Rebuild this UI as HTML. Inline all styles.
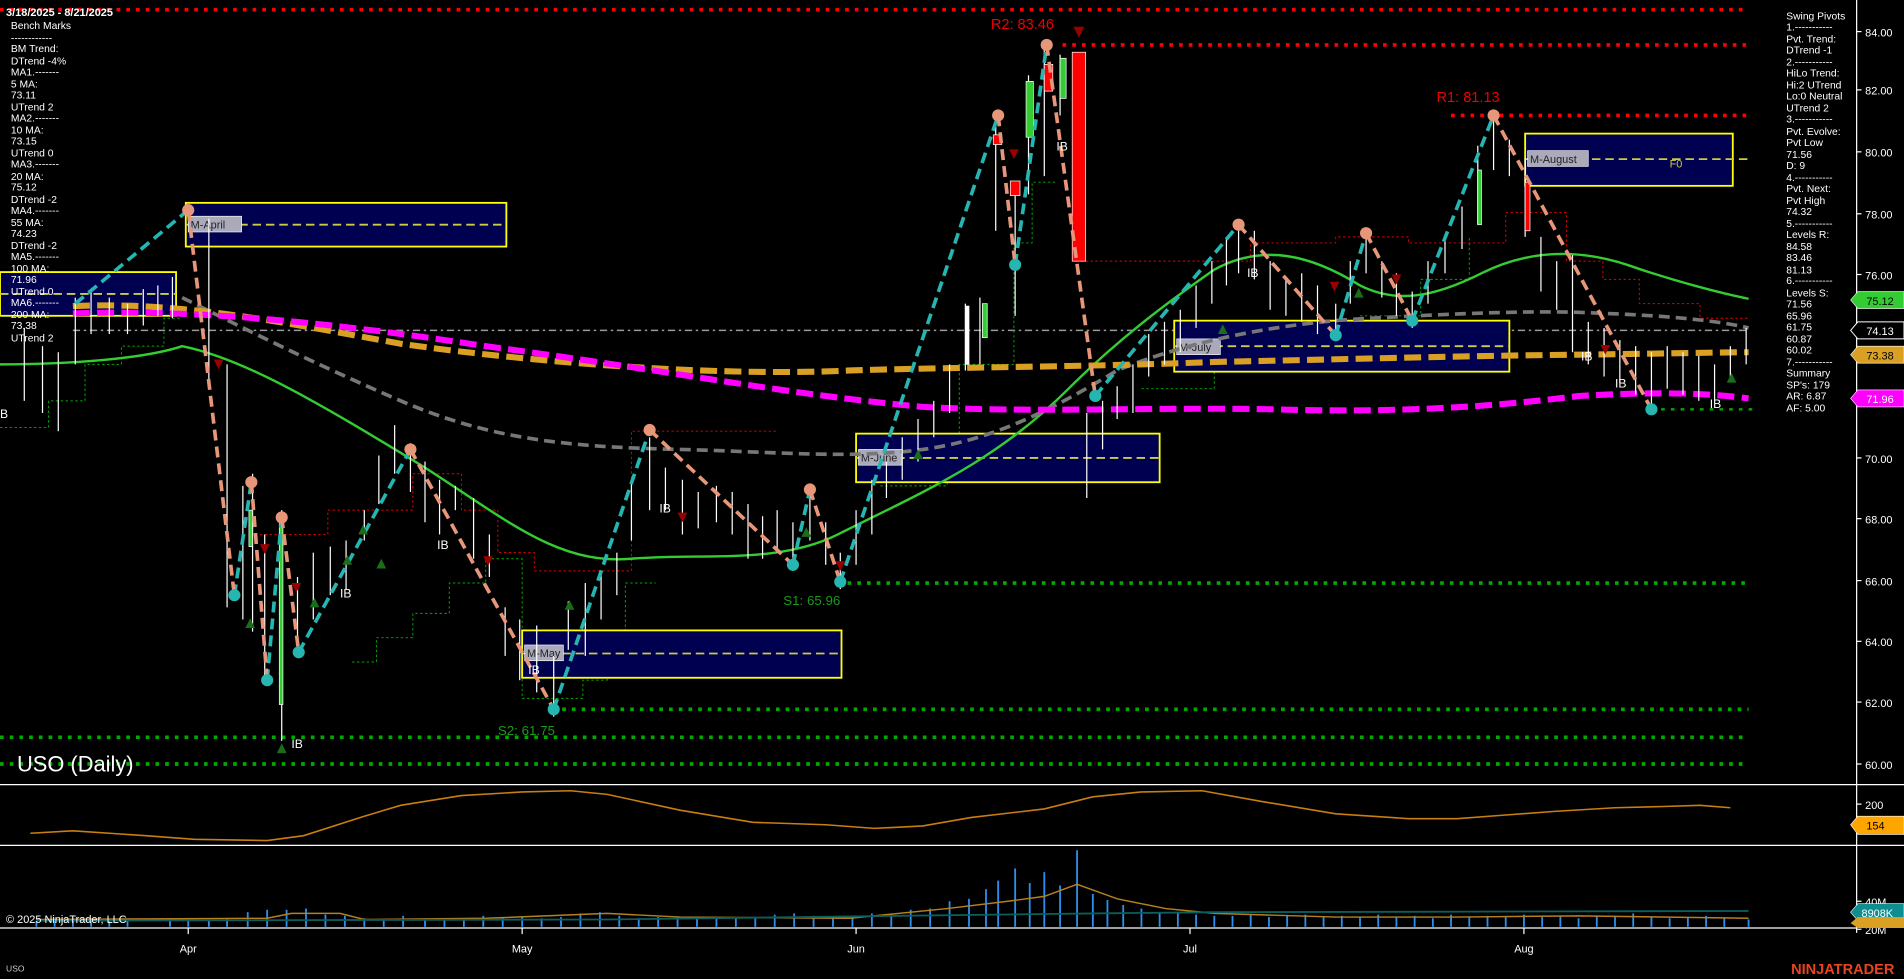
<!DOCTYPE html>
<html><head><meta charset="utf-8"><style>
html,body{margin:0;padding:0;background:#000;overflow:hidden}
svg{display:block}
text{font-family:"Liberation Sans",sans-serif}
</style></head><body>
<svg width="1904" height="979" viewBox="0 0 1568 806" preserveAspectRatio="none" xmlns="http://www.w3.org/2000/svg">
<rect width="1568" height="806" fill="#000"/>
<!-- horizontal level lines -->
<line x1="0" y1="8" x2="1440" y2="8" stroke="#f00" stroke-width="3" stroke-dasharray="3,5"/>
<line x1="875" y1="37" x2="1440" y2="37" stroke="#f00" stroke-width="3" stroke-dasharray="3,5"/>
<line x1="1195" y1="95" x2="1440" y2="95" stroke="#f00" stroke-width="3" stroke-dasharray="3,5"/>
<line x1="690" y1="480" x2="1440" y2="480" stroke="#0a0" stroke-width="3" stroke-dasharray="3,5"/>
<line x1="455" y1="584" x2="1440" y2="584" stroke="#0a0" stroke-width="3" stroke-dasharray="3,5"/>
<line x1="0" y1="607" x2="1440" y2="607" stroke="#0a0" stroke-width="3" stroke-dasharray="3,5"/>
<line x1="0" y1="629" x2="1440" y2="629" stroke="#0a0" stroke-width="3" stroke-dasharray="3,5"/>
<line x1="1360" y1="337" x2="1448" y2="337" stroke="#0a0" stroke-width="2" stroke-dasharray="3,5"/>
<line x1="60" y1="272" x2="1440" y2="272" stroke="#999" stroke-width="1.2" stroke-dasharray="6,3,2,3"/>
<!-- thin step lines -->
<polyline points="0,352 40,352 40,330 70,330 70,300 100,300 100,285 135,285 135,262 150,262" fill="none" stroke="#0a0" stroke-width="0.8" stroke-dasharray="2,2"/>
<polyline points="290,545 310,545 310,525 340,525 340,505 370,505 370,480 400,480 400,460 430,460 430,575 480,575 480,560 500,560 500,520 515,520 515,480 540,480" fill="none" stroke="#0a0" stroke-width="0.8" stroke-dasharray="2,2"/>
<polyline points="725,400 780,400 780,370 790,370 790,300 835,300 835,200 850,200 850,150 870,150" fill="none" stroke="#0a0" stroke-width="0.8" stroke-dasharray="2,2"/>
<polyline points="940,320 1000,320 1000,300 1060,300 1060,280 1120,280 1120,260 1170,260 1170,230 1210,230 1210,195" fill="none" stroke="#0a0" stroke-width="0.8" stroke-dasharray="2,2"/>
<polyline points="210,440 270,440 270,420 340,420 340,390 380,390 380,420 410,420 410,455 440,455 440,470 520,470 520,355 640,355" fill="none" stroke="#d00" stroke-width="0.8" stroke-dasharray="2,2"/>
<polyline points="890,215 1030,215 1030,200 1100,200 1100,195 1160,195 1160,200 1240,200 1240,175 1290,175 1290,215 1320,215 1320,230 1350,230 1350,250 1400,250 1400,262 1440,262" fill="none" stroke="#d00" stroke-width="0.8" stroke-dasharray="2,2"/>
<!-- boxes -->
<g stroke="#ff0" stroke-width="1.5" fill="#000050">
<rect x="153" y="167" width="264" height="36"/>
<rect x="0" y="224" width="145" height="36"/>
<rect x="430" y="519" width="263" height="39"/>
<rect x="705" y="357" width="250" height="40"/>
<rect x="967" y="264" width="276" height="42"/>
<rect x="1256" y="110" width="171" height="43"/>
</g>
<g stroke="#cc4" stroke-width="1.5" stroke-dasharray="7,4">
<line x1="153" y1="185" x2="417" y2="185"/><line x1="0" y1="242" x2="145" y2="242"/>
<line x1="430" y1="538" x2="693" y2="538"/><line x1="705" y1="377" x2="955" y2="377"/>
<line x1="967" y1="285" x2="1243" y2="285"/><line x1="1256" y1="131" x2="1440" y2="131"/>
</g>
<g fill="#aab" stroke="#fff" stroke-width="0.5">
<rect x="155" y="178" width="44" height="13"/><rect x="432" y="531" width="32" height="13"/>
<rect x="707" y="370" width="36" height="13"/><rect x="969" y="279" width="36" height="13"/><rect x="1258" y="124" width="50" height="13"/>
</g>
<g font-size="9" fill="#222"><text x="157" y="188">M-April</text><text x="434" y="541">M-May</text><text x="709" y="380">M-June</text><text x="971" y="289">M-July</text><text x="1260" y="134">M-August</text></g>
<text x="1375" y="138" font-size="9" fill="#cc4">F0</text>
<!-- MAs -->
<path d="M0,300 C60,300 120,295 150,285 C200,295 260,330 350,385 C420,430 460,465 520,460 C580,455 640,465 690,440 C760,405 820,380 880,320 C920,280 960,250 1000,222 C1040,200 1080,210 1120,235 C1150,250 1180,245 1220,225 C1260,205 1300,205 1340,218 C1380,232 1420,242 1440,246" fill="none" stroke="#3c3" stroke-width="2"/>
<path d="M150,245 C200,270 260,300 330,330 C400,360 460,368 560,370 C640,372 700,378 760,370 C820,362 870,335 920,305 C980,280 1060,265 1130,262 C1200,258 1270,255 1320,258 C1380,260 1420,265 1440,270" fill="none" stroke="#777" stroke-width="3" stroke-dasharray="9,5"/>
<path d="M60,252 C150,248 230,265 330,283 C450,300 600,310 700,305 C800,302 900,302 1000,298 C1100,296 1200,293 1300,292 C1380,291 1420,290 1440,290" fill="none" stroke="#d9a024" stroke-width="5" stroke-dasharray="14,6"/>
<path d="M60,258 C150,255 250,262 400,285 C550,305 650,325 760,335 C850,340 950,335 1050,337 C1150,340 1230,335 1300,326 C1370,322 1410,324 1440,328" fill="none" stroke="#f0f" stroke-width="5" stroke-dasharray="14,6"/>
<!-- candles -->
<g stroke="#fff" stroke-width="1">
<line x1="20" y1="270" x2="20" y2="330"/><line x1="35" y1="285" x2="35" y2="340"/><line x1="48" y1="290" x2="48" y2="355"/><line x1="62" y1="245" x2="62" y2="300"/><line x1="75" y1="240" x2="75" y2="275"/><line x1="90" y1="245" x2="90" y2="275"/><line x1="105" y1="250" x2="105" y2="275"/><line x1="118" y1="238" x2="118" y2="268"/><line x1="130" y1="235" x2="130" y2="260"/><line x1="142" y1="228" x2="142" y2="262"/>
<line x1="172" y1="180" x2="172" y2="320"/><line x1="187" y1="300" x2="187" y2="500"/><line x1="200" y1="400" x2="200" y2="510"/><line x1="208" y1="390" x2="208" y2="520"/><line x1="218" y1="440" x2="218" y2="560"/><line x1="232" y1="420" x2="232" y2="610"/><line x1="245" y1="475" x2="245" y2="540"/><line x1="258" y1="455" x2="258" y2="510"/><line x1="272" y1="450" x2="272" y2="490"/><line x1="285" y1="445" x2="285" y2="485"/><line x1="300" y1="420" x2="300" y2="445"/><line x1="312" y1="375" x2="312" y2="415"/><line x1="325" y1="350" x2="325" y2="390"/><line x1="338" y1="365" x2="338" y2="405"/><line x1="350" y1="380" x2="350" y2="430"/><line x1="362" y1="395" x2="362" y2="440"/><line x1="375" y1="400" x2="375" y2="420"/><line x1="390" y1="410" x2="390" y2="460"/><line x1="403" y1="440" x2="403" y2="475"/><line x1="416" y1="500" x2="416" y2="540"/><line x1="428" y1="510" x2="428" y2="560"/><line x1="442" y1="515" x2="442" y2="570"/><line x1="456" y1="540" x2="456" y2="590"/><line x1="468" y1="495" x2="468" y2="535"/><line x1="482" y1="480" x2="482" y2="540"/><line x1="495" y1="470" x2="495" y2="510"/><line x1="508" y1="455" x2="508" y2="490"/><line x1="520" y1="395" x2="520" y2="445"/><line x1="535" y1="360" x2="535" y2="420"/><line x1="548" y1="385" x2="548" y2="420"/><line x1="562" y1="395" x2="562" y2="440"/><line x1="575" y1="405" x2="575" y2="435"/><line x1="590" y1="400" x2="590" y2="430"/><line x1="603" y1="405" x2="603" y2="440"/><line x1="616" y1="415" x2="616" y2="460"/><line x1="628" y1="425" x2="628" y2="460"/><line x1="640" y1="420" x2="640" y2="455"/><line x1="653" y1="430" x2="653" y2="470"/><line x1="667" y1="405" x2="667" y2="445"/><line x1="680" y1="430" x2="680" y2="465"/><line x1="692" y1="455" x2="692" y2="485"/><line x1="705" y1="420" x2="705" y2="465"/><line x1="718" y1="395" x2="718" y2="440"/><line x1="730" y1="380" x2="730" y2="410"/><line x1="743" y1="360" x2="743" y2="395"/><line x1="756" y1="345" x2="756" y2="380"/><line x1="769" y1="330" x2="769" y2="360"/><line x1="782" y1="300" x2="782" y2="340"/><line x1="795" y1="250" x2="795" y2="305"/><line x1="807" y1="245" x2="807" y2="300"/><line x1="820" y1="100" x2="820" y2="190"/><line x1="836" y1="160" x2="836" y2="260"/><line x1="847" y1="62" x2="847" y2="160"/><line x1="860" y1="40" x2="860" y2="145"/><line x1="873" y1="45" x2="873" y2="95"/>
<line x1="895" y1="340" x2="895" y2="410"/><line x1="908" y1="330" x2="908" y2="370"/><line x1="920" y1="318" x2="920" y2="345"/><line x1="933" y1="300" x2="933" y2="340"/><line x1="946" y1="275" x2="946" y2="310"/><line x1="959" y1="265" x2="959" y2="300"/><line x1="972" y1="255" x2="972" y2="290"/><line x1="985" y1="235" x2="985" y2="270"/><line x1="998" y1="215" x2="998" y2="250"/><line x1="1010" y1="195" x2="1010" y2="235"/><line x1="1020" y1="185" x2="1020" y2="225"/><line x1="1033" y1="190" x2="1033" y2="230"/><line x1="1046" y1="215" x2="1046" y2="255"/><line x1="1059" y1="230" x2="1059" y2="260"/><line x1="1072" y1="225" x2="1072" y2="265"/><line x1="1085" y1="235" x2="1085" y2="275"/><line x1="1100" y1="250" x2="1100" y2="280"/><line x1="1112" y1="215" x2="1112" y2="250"/><line x1="1125" y1="190" x2="1125" y2="225"/><line x1="1138" y1="215" x2="1138" y2="245"/><line x1="1150" y1="225" x2="1150" y2="260"/><line x1="1163" y1="240" x2="1163" y2="270"/><line x1="1176" y1="215" x2="1176" y2="250"/><line x1="1190" y1="195" x2="1190" y2="225"/><line x1="1204" y1="170" x2="1204" y2="205"/><line x1="1217" y1="120" x2="1217" y2="185"/><line x1="1230" y1="95" x2="1230" y2="140"/><line x1="1243" y1="115" x2="1243" y2="145"/><line x1="1256" y1="130" x2="1256" y2="195"/><line x1="1269" y1="195" x2="1269" y2="240"/><line x1="1282" y1="215" x2="1282" y2="255"/><line x1="1295" y1="210" x2="1295" y2="290"/><line x1="1308" y1="265" x2="1308" y2="300"/><line x1="1321" y1="270" x2="1321" y2="310"/><line x1="1334" y1="280" x2="1334" y2="315"/><line x1="1347" y1="285" x2="1347" y2="325"/><line x1="1360" y1="290" x2="1360" y2="340"/><line x1="1373" y1="285" x2="1373" y2="320"/><line x1="1386" y1="290" x2="1386" y2="325"/><line x1="1399" y1="293" x2="1399" y2="330"/><line x1="1412" y1="300" x2="1412" y2="330"/><line x1="1425" y1="285" x2="1425" y2="315"/><line x1="1438" y1="270" x2="1438" y2="300"/>
</g>
<g stroke="#fff" stroke-width="0.6">
<rect x="845" y="67" width="6" height="46" fill="#3c3"/><rect x="873" y="48" width="5" height="33" fill="#3c3"/>
<rect x="883" y="43" width="11" height="172" fill="#f00"/><rect x="832" y="149" width="8" height="12" fill="#f00"/>
<rect x="818" y="111" width="7" height="8" fill="#f00"/><rect x="860" y="53" width="7" height="22" fill="#f00"/>
<rect x="230" y="430" width="3" height="150" fill="#3c3"/><rect x="205" y="420" width="3" height="30" fill="#3c3"/>
<rect x="795" y="252" width="3" height="48" fill="#fff"/><rect x="809" y="250" width="4" height="28" fill="#3c3"/>
<rect x="1217" y="140" width="3" height="45" fill="#3c3"/><rect x="1256" y="150" width="4" height="40" fill="#f00"/>
</g>
<!-- swing zigzag -->
<polyline points="62,250 155,173 M193,490" fill="none"/>
<g fill="none" stroke-width="3" stroke-dasharray="9,5">
<path stroke="#26b5b0" d="M62,250 L155,173 M193,490 L207,397 M220,560 L232,426 M246,537 L338,370 M456,584 L535,354 M653,465 L667,403 M692,479 L822,95 M836,218 L862,37 M902,326 L1020,185 M1100,276 L1125,192 M1163,264 L1230,95"/>
<path stroke="#e8967a" d="M155,173 L193,490 M207,397 L220,560 M232,426 L246,537 M338,370 L456,584 M535,354 L653,465 M667,403 L692,479 M822,95 L836,218 M862,37 L902,326 M1020,185 L1100,276 M1125,192 L1163,264 M1230,95 L1360,337"/>
</g>
<g fill="#e8967a"><circle cx="155" cy="173" r="5"/><circle cx="207" cy="397" r="5"/><circle cx="232" cy="426" r="5"/><circle cx="338" cy="370" r="5"/><circle cx="535" cy="354" r="5"/><circle cx="667" cy="403" r="5"/><circle cx="822" cy="95" r="5"/><circle cx="862" cy="37" r="5"/><circle cx="1020" cy="185" r="5"/><circle cx="1125" cy="192" r="5"/><circle cx="1230" cy="95" r="5"/></g>
<g fill="#26b5b0"><circle cx="193" cy="490" r="5"/><circle cx="220" cy="560" r="5"/><circle cx="246" cy="537" r="5"/><circle cx="456" cy="584" r="5"/><circle cx="653" cy="465" r="5"/><circle cx="692" cy="479" r="5"/><circle cx="836" cy="218" r="5"/><circle cx="902" cy="326" r="5"/><circle cx="1100" cy="276" r="5"/><circle cx="1163" cy="264" r="5"/><circle cx="1360" cy="337" r="5"/></g>
<!-- triangles -->
<g fill="#900"><path d="M176,296h8l-4,8z"/><path d="M214,448h8l-4,8z"/><path d="M240,480h8l-4,8z"/><path d="M398,458h8l-4,8z"/><path d="M558,422h8l-4,8z"/><path d="M688,462h8l-4,8z"/><path d="M831,123h8l-4,8z"/><path d="M884,22h9l-4.5,9z"/><path d="M1095,232h8l-4,8z"/><path d="M1146,226h8l-4,8z"/><path d="M1318,284h8l-4,8z"/></g>
<g fill="#1a6e1a"><path d="M202,517h8l-4,-8z"/><path d="M228,620h8l-4,-8z"/><path d="M255,500h8l-4,-8z"/><path d="M282,465h8l-4,-8z"/><path d="M295,440h8l-4,-8z"/><path d="M310,468h8l-4,-8z"/><path d="M465,502h8l-4,-8z"/><path d="M660,442h8l-4,-8z"/><path d="M752,378h8l-4,-8z"/><path d="M1003,275h8l-4,-8z"/><path d="M1115,245h8l-4,-8z"/><path d="M1422,315h8l-4,-8z"/></g>
<g font-size="10" fill="#fff"><text x="240" y="616">IB</text><text x="280" y="492">IB</text><text x="360" y="452">IB</text><text x="543" y="422">IB</text><text x="435" y="555">IB</text><text x="870" y="124">IB</text><text x="1027" y="228">IB</text><text x="1302" y="297">IB</text><text x="1330" y="319">IB</text><text x="1408" y="336">IB</text><text x="0" y="344">B</text></g>
<!-- level labels -->
<text x="816" y="24" font-size="12" fill="#e00">R2: 83.46</text>
<text x="1183" y="84" font-size="12" fill="#e00">R1: 81.13</text>
<text x="645" y="498" font-size="11" fill="#1a9a1a">S1: 65.96</text>
<text x="410" y="605" font-size="11" fill="#1a9a1a">S2: 61.75</text>
<text x="14" y="635" font-size="18" fill="#fff">USO (Daily)</text>
<text x="5" y="13" font-size="9" fill="#fff" font-weight="bold">3/18/2025 - 8/21/2025</text>
<!-- left info -->
<g font-size="8.5" fill="#fff">
<text x="9" y="24">Bench Marks</text><text x="9" y="34">------------</text><text x="9" y="43">BM Trend:</text><text x="9" y="53">DTrend -4%</text><text x="9" y="62">MA1.-------</text><text x="9" y="72">5 MA:</text><text x="9" y="81">73.11</text><text x="9" y="91">UTrend 2</text><text x="9" y="100">MA2.-------</text><text x="9" y="110">10 MA:</text><text x="9" y="119">73.15</text><text x="9" y="129">UTrend 0</text><text x="9" y="138">MA3.-------</text><text x="9" y="148">20 MA:</text><text x="9" y="157">75.12</text><text x="9" y="167">DTrend -2</text><text x="9" y="176">MA4.-------</text><text x="9" y="186">55 MA:</text><text x="9" y="195">74.23</text><text x="9" y="205">DTrend -2</text><text x="9" y="214">MA5.-------</text><text x="9" y="224">100 MA:</text><text x="9" y="233">71.96</text><text x="9" y="243">UTrend 0</text><text x="9" y="252">MA6.-------</text><text x="9" y="262">200 MA:</text><text x="9" y="271">73.38</text><text x="9" y="281">UTrend 2</text>
</g>
<!-- right info -->
<g font-size="8.5" fill="#fff">
<text x="1471" y="16">Swing Pivots</text><text x="1471" y="25">1.-----------</text><text x="1471" y="35">Pvt. Trend:</text><text x="1471" y="44">DTrend -1</text><text x="1471" y="54">2.-----------</text><text x="1471" y="63">HiLo Trend:</text><text x="1471" y="73">Hi:2 UTrend</text><text x="1471" y="82">Lo:0 Neutral</text><text x="1471" y="92">UTrend 2</text><text x="1471" y="101">3.-----------</text><text x="1471" y="111">Pvt. Evolve:</text><text x="1471" y="120">Pvt Low</text><text x="1471" y="130">71.56</text><text x="1471" y="139">D: 9</text><text x="1471" y="149">4.-----------</text><text x="1471" y="158">Pvt. Next:</text><text x="1471" y="168">Pvt High</text><text x="1471" y="177">74.32</text><text x="1471" y="187">5.-----------</text><text x="1471" y="196">Levels R:</text><text x="1471" y="206">84.58</text><text x="1471" y="215">83.46</text><text x="1471" y="225">81.13</text><text x="1471" y="234">6.-----------</text><text x="1471" y="244">Levels S:</text><text x="1471" y="253">71.56</text><text x="1471" y="263">65.96</text><text x="1471" y="272">61.75</text><text x="1471" y="282">60.87</text><text x="1471" y="291">60.02</text><text x="1471" y="301">7.-----------</text><text x="1471" y="310">Summary</text><text x="1471" y="320">SP's: 179</text><text x="1471" y="329">AR: 6.87</text><text x="1471" y="339">AF: 5.00</text>
</g>
<!-- axis -->
<line x1="1529" y1="0" x2="1529" y2="768" stroke="#fff" stroke-width="1"/>
<g stroke="#fff"><line x1="1529" y1="26" x2="1533" y2="26"/><line x1="1529" y1="74" x2="1533" y2="74"/><line x1="1529" y1="125" x2="1533" y2="125"/><line x1="1529" y1="176" x2="1533" y2="176"/><line x1="1529" y1="226" x2="1533" y2="226"/><line x1="1529" y1="377" x2="1533" y2="377"/><line x1="1529" y1="427" x2="1533" y2="427"/><line x1="1529" y1="478" x2="1533" y2="478"/><line x1="1529" y1="528" x2="1533" y2="528"/><line x1="1529" y1="578" x2="1533" y2="578"/><line x1="1529" y1="629" x2="1533" y2="629"/><line x1="1529" y1="662" x2="1533" y2="662"/><line x1="1529" y1="742" x2="1533" y2="742"/><line x1="1529" y1="765" x2="1533" y2="765"/></g>
<g font-size="9" fill="#fff"><text x="1536" y="30">84.00</text><text x="1536" y="78">82.00</text><text x="1536" y="129">80.00</text><text x="1536" y="180">78.00</text><text x="1536" y="230">76.00</text><text x="1536" y="381">70.00</text><text x="1536" y="431">68.00</text><text x="1536" y="482">66.00</text><text x="1536" y="532">64.00</text><text x="1536" y="582">62.00</text><text x="1536" y="633">60.00</text><text x="1536" y="666">200</text><text x="1536" y="746">40M</text><text x="1536" y="769">20M</text></g>
<!-- flags -->
<path d="M1524,247 l6,-7 h38 v14 h-38z" fill="#3c3" stroke="#fff" stroke-width="0.5"/><text x="1537" y="251" font-size="9" fill="#000">75.12</text>
<path d="M1524,272 l6,-7 h38 v14 h-38z" fill="#000" stroke="#fff" stroke-width="0.8"/><text x="1537" y="276" font-size="9" fill="#fff">74.13</text>
<path d="M1524,292 l6,-7 h38 v14 h-38z" fill="#d9a024" stroke="#fff" stroke-width="0.5"/><text x="1537" y="296" font-size="9" fill="#000">73.38</text>
<path d="M1524,328 l6,-7 h38 v14 h-38z" fill="#f0f" stroke="#fff" stroke-width="0.5"/><text x="1537" y="332" font-size="9" fill="#fff">71.96</text>
<!-- panels separators -->
<line x1="0" y1="646" x2="1568" y2="646" stroke="#fff" stroke-width="1"/>
<line x1="0" y1="696" x2="1568" y2="696" stroke="#fff" stroke-width="1"/>
<line x1="0" y1="764" x2="1529" y2="764" stroke="#fff" stroke-width="1"/>
<!-- indicator -->
<path d="M25,686 L60,684 L120,688 L160,691 L220,692 L250,688 L300,672 L330,663 L380,655 L430,652 L470,651 L500,654 L560,667 L620,677 L680,679 L720,682 L760,680 L800,673 L860,666 L900,656 L940,652 L990,651 L1040,660 L1100,670 L1160,674 L1200,674 L1240,671 L1280,668 L1330,665 L1370,664 L1400,663 L1425,665" fill="none" stroke="#c87e10" stroke-width="1.3"/>
<path d="M1524,679 l6,-7 h38 v15 h-38z" fill="#ffa500" stroke="#fff" stroke-width="0.5"/><text x="1537" y="683" font-size="9" fill="#000">154</text>
<!-- volume -->
<g stroke="#2a8ff0" stroke-width="1.5">
<line x1="30" y1="763" x2="30" y2="758"/><line x1="45" y1="763" x2="45" y2="757"/><line x1="60" y1="763" x2="60" y2="756"/><line x1="75" y1="763" x2="75" y2="758"/><line x1="90" y1="763" x2="90" y2="757"/><line x1="105" y1="763" x2="105" y2="758"/><line x1="140" y1="763" x2="140" y2="757"/><line x1="155" y1="763" x2="155" y2="757"/><line x1="172" y1="763" x2="172" y2="757"/><line x1="187" y1="763" x2="187" y2="756"/><line x1="204" y1="763" x2="204" y2="751"/><line x1="220" y1="763" x2="220" y2="749"/><line x1="236" y1="763" x2="236" y2="749"/><line x1="252" y1="763" x2="252" y2="748"/><line x1="268" y1="763" x2="268" y2="753"/><line x1="284" y1="763" x2="284" y2="754"/><line x1="300" y1="763" x2="300" y2="756"/><line x1="316" y1="763" x2="316" y2="757"/><line x1="332" y1="763" x2="332" y2="754"/><line x1="350" y1="763" x2="350" y2="756"/><line x1="366" y1="763" x2="366" y2="756"/><line x1="382" y1="763" x2="382" y2="756"/><line x1="398" y1="763" x2="398" y2="754"/><line x1="414" y1="763" x2="414" y2="755"/><line x1="430" y1="763" x2="430" y2="755"/><line x1="446" y1="763" x2="446" y2="756"/><line x1="462" y1="763" x2="462" y2="755"/><line x1="478" y1="763" x2="478" y2="752"/><line x1="494" y1="763" x2="494" y2="751"/><line x1="510" y1="763" x2="510" y2="754"/><line x1="526" y1="763" x2="526" y2="756"/><line x1="542" y1="763" x2="542" y2="755"/><line x1="558" y1="763" x2="558" y2="755"/><line x1="574" y1="763" x2="574" y2="755"/><line x1="590" y1="763" x2="590" y2="755"/><line x1="606" y1="763" x2="606" y2="755"/><line x1="622" y1="763" x2="622" y2="755"/><line x1="638" y1="763" x2="638" y2="753"/><line x1="654" y1="763" x2="654" y2="752"/><line x1="670" y1="763" x2="670" y2="754"/><line x1="686" y1="763" x2="686" y2="755"/><line x1="702" y1="763" x2="702" y2="754"/><line x1="718" y1="763" x2="718" y2="752"/><line x1="734" y1="763" x2="734" y2="752"/><line x1="750" y1="763" x2="750" y2="749"/><line x1="766" y1="763" x2="766" y2="748"/><line x1="782" y1="763" x2="782" y2="742"/><line x1="798" y1="763" x2="798" y2="740"/><line x1="812" y1="763" x2="812" y2="732"/><line x1="822" y1="763" x2="822" y2="725"/><line x1="836" y1="763" x2="836" y2="715"/><line x1="848" y1="763" x2="848" y2="727"/><line x1="860" y1="763" x2="860" y2="718"/><line x1="873" y1="763" x2="873" y2="729"/><line x1="887" y1="763" x2="887" y2="700"/><line x1="900" y1="763" x2="900" y2="736"/><line x1="912" y1="763" x2="912" y2="741"/><line x1="925" y1="763" x2="925" y2="745"/><line x1="940" y1="763" x2="940" y2="748"/><line x1="955" y1="763" x2="955" y2="751"/><line x1="970" y1="763" x2="970" y2="752"/><line x1="985" y1="763" x2="985" y2="753"/><line x1="1000" y1="763" x2="1000" y2="754"/><line x1="1015" y1="763" x2="1015" y2="754"/><line x1="1030" y1="763" x2="1030" y2="753"/><line x1="1045" y1="763" x2="1045" y2="755"/><line x1="1060" y1="763" x2="1060" y2="754"/><line x1="1075" y1="763" x2="1075" y2="753"/><line x1="1090" y1="763" x2="1090" y2="755"/><line x1="1105" y1="763" x2="1105" y2="754"/><line x1="1120" y1="763" x2="1120" y2="755"/><line x1="1135" y1="763" x2="1135" y2="753"/><line x1="1150" y1="763" x2="1150" y2="755"/><line x1="1165" y1="763" x2="1165" y2="754"/><line x1="1180" y1="763" x2="1180" y2="756"/><line x1="1195" y1="763" x2="1195" y2="753"/><line x1="1210" y1="763" x2="1210" y2="755"/><line x1="1225" y1="763" x2="1225" y2="754"/><line x1="1240" y1="763" x2="1240" y2="755"/><line x1="1255" y1="763" x2="1255" y2="753"/><line x1="1270" y1="763" x2="1270" y2="755"/><line x1="1285" y1="763" x2="1285" y2="754"/><line x1="1300" y1="763" x2="1300" y2="756"/><line x1="1315" y1="763" x2="1315" y2="754"/><line x1="1330" y1="763" x2="1330" y2="754"/><line x1="1345" y1="763" x2="1345" y2="752"/><line x1="1360" y1="763" x2="1360" y2="755"/><line x1="1375" y1="763" x2="1375" y2="756"/><line x1="1390" y1="763" x2="1390" y2="755"/><line x1="1405" y1="763" x2="1405" y2="754"/><line x1="1420" y1="763" x2="1420" y2="756"/><line x1="1440" y1="763" x2="1440" y2="757"/>
</g>
<path d="M30,757 L220,756 L240,752 L280,752 L300,757 L400,756 L500,752 L560,755 L700,756 L780,748 L830,742 L860,738 L887,728 L920,740 L960,748 L1000,752 L1100,755 L1200,755 L1300,754 L1440,756" fill="none" stroke="#b58020" stroke-width="1.2"/>
<path d="M30,758 L500,757 L900,752 L1000,751 L1440,750" fill="none" stroke="#0a5e5e" stroke-width="1.5"/>
<path d="M1524,751 l6,-7 h38 v14 h-38z" fill="#0e8e8e" stroke="#fff" stroke-width="0.5"/><text x="1533" y="755" font-size="9" fill="#fff">8908K</text>
<path d="M1524,760 l6,-5 h38 v9 h-38z" fill="#d9a024"/>
<text x="5" y="760" font-size="9" fill="#fff">© 2025 NinjaTrader, LLC</text>
<!-- date axis -->
<g stroke="#fff"><line x1="155" y1="764" x2="155" y2="769"/><line x1="430" y1="764" x2="430" y2="769"/><line x1="705" y1="764" x2="705" y2="769"/><line x1="980" y1="764" x2="980" y2="769"/><line x1="1255" y1="764" x2="1255" y2="769"/></g>
<g font-size="9" fill="#fff" text-anchor="middle"><text x="155" y="784">Apr</text><text x="430" y="784">May</text><text x="705" y="784">Jun</text><text x="980" y="784">Jul</text><text x="1255" y="784">Aug</text></g>
<text x="5" y="800" font-size="7" fill="#ccc">USO</text>
<text x="1475" y="802" font-size="12" font-weight="bold" fill="#e8441e">NINJATRADER</text>
</svg>
</body></html>
